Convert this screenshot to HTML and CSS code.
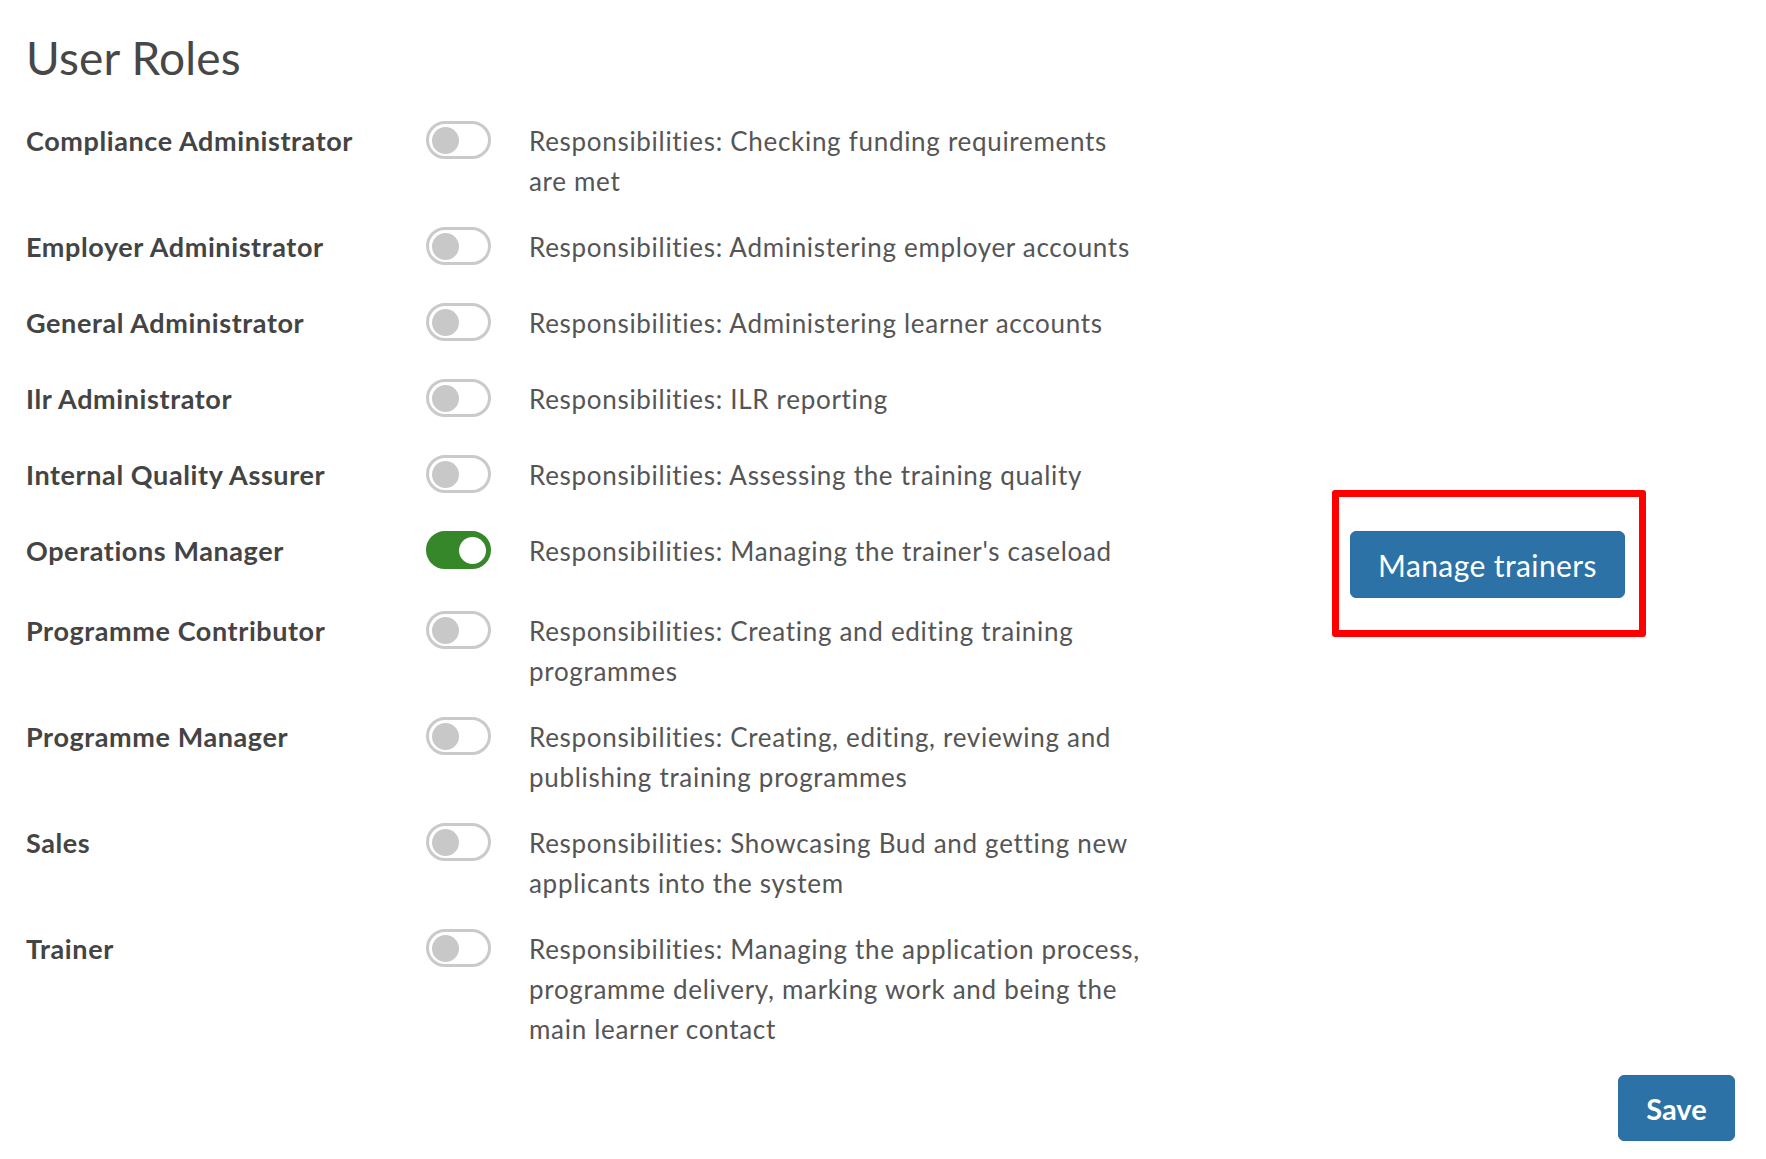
FILE: index.html
```html
<!DOCTYPE html>
<html lang="en">
<head>
<meta charset="utf-8">
<title>User Roles</title>
<link rel="stylesheet" href="styles.css">
</head>
<body>
<main class="page">
  <h1 class="title">User Roles</h1>
  <div class="roles">
    <div class="role">
      <div class="role-name">Compliance Administrator</div>
      <div class="role-toggle"><span class="switch"><span class="knob"></span></span></div>
      <div class="role-desc">Responsibilities: Checking funding requirements are met</div>
    </div>
    <div class="role">
      <div class="role-name">Employer Administrator</div>
      <div class="role-toggle"><span class="switch"><span class="knob"></span></span></div>
      <div class="role-desc">Responsibilities: Administering employer accounts</div>
    </div>
    <div class="role">
      <div class="role-name">General Administrator</div>
      <div class="role-toggle"><span class="switch"><span class="knob"></span></span></div>
      <div class="role-desc">Responsibilities: Administering learner accounts</div>
    </div>
    <div class="role">
      <div class="role-name">Ilr Administrator</div>
      <div class="role-toggle"><span class="switch"><span class="knob"></span></span></div>
      <div class="role-desc">Responsibilities: ILR reporting</div>
    </div>
    <div class="role">
      <div class="role-name">Internal Quality Assurer</div>
      <div class="role-toggle"><span class="switch"><span class="knob"></span></span></div>
      <div class="role-desc">Responsibilities: Assessing the training quality</div>
    </div>
    <div class="role role-active">
      <div class="role-name">Operations Manager</div>
      <div class="role-toggle"><span class="switch switch-on"><span class="knob"></span></span></div>
      <div class="role-desc">Responsibilities: Managing the trainer's caseload</div>
      <div class="role-action">
        <button class="btn btn-manage" type="button">Manage trainers</button>
        <span class="highlight"></span>
      </div>
    </div>
    <div class="role">
      <div class="role-name">Programme Contributor</div>
      <div class="role-toggle"><span class="switch"><span class="knob"></span></span></div>
      <div class="role-desc">Responsibilities: Creating and editing training programmes</div>
    </div>
    <div class="role">
      <div class="role-name">Programme Manager</div>
      <div class="role-toggle"><span class="switch"><span class="knob"></span></span></div>
      <div class="role-desc">Responsibilities: Creating, editing, reviewing and publishing training programmes</div>
    </div>
    <div class="role">
      <div class="role-name">Sales</div>
      <div class="role-toggle"><span class="switch"><span class="knob"></span></span></div>
      <div class="role-desc">Responsibilities: Showcasing Bud and getting new applicants into the system</div>
    </div>
    <div class="role">
      <div class="role-name">Trainer</div>
      <div class="role-toggle"><span class="switch"><span class="knob"></span></span></div>
      <div class="role-desc">Responsibilities: Managing the application process, programme delivery, marking work and being the main learner contact</div>
    </div>
  </div>
  <div class="footer">
    <button class="btn btn-save" type="button">Save</button>
  </div>
</main>
</body>
</html>
```

FILE: styles.css
```css
* { box-sizing: border-box; }
html, body { margin: 0; padding: 0; background: #ffffff; }
body { font-family: Lato, "Open Sans", sans-serif; color: #444444; }

.page { padding: 29px 31px 0 26px; }

.title {
  margin: 0;
  font-family: Lato, sans-serif;
  font-weight: 400;
  font-size: 46px;
  letter-spacing: 0.2px;
  line-height: 58px;
  color: #474747;
}

.roles { margin-top: 34px; }

.role {
  display: flex;
  align-items: flex-start;
  min-height: 50px;
  margin-bottom: 26px;
}
.role-active { min-height: 54px; }

.role-name {
  width: 400px;
  flex: none;
  font-weight: 700;
  font-size: 27px;
  letter-spacing: 0.6px;
  line-height: 40px;
  color: #444444;
}

.role-toggle { width: 103px; flex: none; }

.switch {
  display: flex;
  align-items: center;
  width: 65px;
  height: 38px;
  border: 3px solid #cacaca;
  border-radius: 19px;
  padding: 0 3px;
  background: #ffffff;
}
.knob {
  display: block;
  width: 27px;
  height: 27px;
  border-radius: 50%;
  background: #c8c8c8;
}
.switch-on {
  background: #36872a;
  border-color: #36872a;
  justify-content: flex-end;
  padding: 0 2px;
}
.switch-on .knob { background: #ffffff; }

.role-desc {
  width: 618px;
  flex: none;
  font-weight: 400;
  font-size: 26px;
  letter-spacing: 0.7px;
  line-height: 40px;
  color: #555555;
}

.role-action {
  position: relative;
  margin-left: 203px;
  margin-bottom: -13px;
}

.btn {
  font-family: Lato, sans-serif;
  color: #ffffff;
  background: #2d72a6;
  border: 1px solid #2a6ea3;
  border-radius: 6px;
  cursor: pointer;
}
.btn-manage {
  display: block;
  width: 275px;
  height: 67px;
  font-size: 30px;
  letter-spacing: 0.4px;
  font-weight: 400;
}
.highlight {
  position: absolute;
  top: -41px;
  left: -18px;
  right: -21px;
  bottom: -39px;
  border: 7px solid #ff0000;
  border-radius: 3px;
  pointer-events: none;
}

.footer {
  display: flex;
  justify-content: flex-end;
  margin-top: 3px;
}
.btn-save {
  width: 117px;
  height: 66px;
  font-size: 29px;
  font-weight: 700;
}
```
